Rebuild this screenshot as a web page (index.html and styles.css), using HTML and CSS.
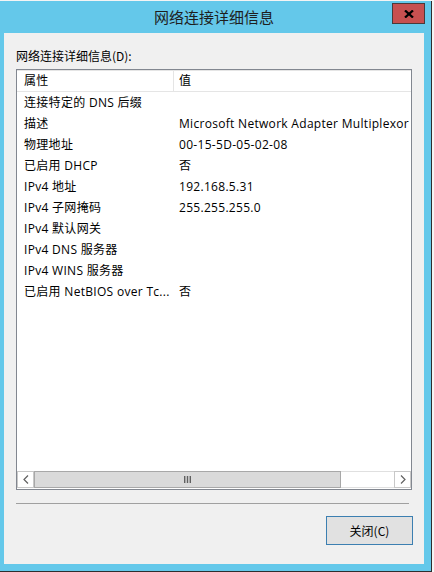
FILE: index.html
```html
<!DOCTYPE html>
<html lang="zh-CN">
<head>
<meta charset="utf-8">
<title>网络连接详细信息</title>
<link rel="stylesheet" href="styles.css">
</head>
<body>
<div class="window">
  <div class="titlebar">
    <div class="title">网络连接详细信息</div>
    <div class="close-btn" aria-label="关闭">
      <svg width="10" height="8" viewBox="0 0 10 8"><path d="M1 0.5 L9 7.5 M9 0.5 L1 7.5" stroke="#000" stroke-width="2.3" fill="none"/></svg>
    </div>
  </div>
  <div class="client">
    <div class="label">网络连接详细信息(D):</div>
    <div class="listbox">
      <div class="header">
        <div class="col1 hcell">属性</div>
        <div class="col2 hcell">值</div>
      </div>
      <div class="rows">
        <div class="row"><div class="col1">连接特定的 DNS 后缀</div><div class="col2"></div></div>
        <div class="row"><div class="col1">描述</div><div class="col2">Microsoft Network Adapter Multiplexor</div></div>
        <div class="row"><div class="col1">物理地址</div><div class="col2">00-15-5D-05-02-08</div></div>
        <div class="row"><div class="col1">已启用 DHCP</div><div class="col2">否</div></div>
        <div class="row"><div class="col1">IPv4 地址</div><div class="col2">192.168.5.31</div></div>
        <div class="row"><div class="col1">IPv4 子网掩码</div><div class="col2">255.255.255.0</div></div>
        <div class="row"><div class="col1">IPv4 默认网关</div><div class="col2"></div></div>
        <div class="row"><div class="col1">IPv4 DNS 服务器</div><div class="col2"></div></div>
        <div class="row"><div class="col1">IPv4 WINS 服务器</div><div class="col2"></div></div>
        <div class="row"><div class="col1">已启用 NetBIOS over Tc...</div><div class="col2">否</div></div>
      </div>
      <div class="hscroll">
        <div class="sbtn">
          <svg width="6" height="9" viewBox="0 0 6 9"><path d="M5 0.5 L1 4.5 L5 8.5" stroke="#606060" stroke-width="1.2" fill="none"/></svg>
        </div>
        <div class="thumb">
          <svg width="7" height="7" viewBox="0 0 7 7"><rect x="0" y="0" width="1.4" height="7" fill="#606060"/><rect x="2.8" y="0" width="1.4" height="7" fill="#606060"/><rect x="5.6" y="0" width="1.4" height="7" fill="#606060"/></svg>
        </div>
        <div class="track"></div>
        <div class="sbtn">
          <svg width="6" height="9" viewBox="0 0 6 9"><path d="M1 0.5 L5 4.5 L1 8.5" stroke="#606060" stroke-width="1.2" fill="none"/></svg>
        </div>
      </div>
    </div>
    <div class="separator"></div>
    <div class="footer">
      <button class="button">关闭(C)</button>
    </div>
  </div>
</div>
</body>
</html>
```
FILE: styles.css
```css
html, body {
  margin: 0;
  padding: 0;
}
body {
  background: #f4f4f4;
  width: 434px;
  height: 572px;
  overflow: hidden;
  font-family: "Open Sans", "Noto Sans CJK SC", sans-serif;
  font-size: 12px;
  color: #000;
}
.window {
  margin-top: 1px;
  width: 432px;
  height: 571px;
  box-sizing: border-box;
  background: #64c8ea;
  border-right: 1px solid #2e2e2e;
  border-bottom: 1px solid #2e2e2e;
  padding: 0 7px 7px 4px;
  display: flex;
  flex-direction: column;
}
.titlebar {
  position: relative;
  height: 32px;
  flex: none;
  display: flex;
  align-items: center;
  justify-content: center;
}
.title {
  font-family: "Noto Sans CJK SC", sans-serif;
  font-size: 15px;
  color: #1e1e1e;
  line-height: 20px;
  margin-top: -1px;
}
.close-btn {
  position: absolute;
  left: 388px;
  top: 2px;
  width: 31px;
  height: 19px;
  background: #c75050;
  border: 1px solid #4a3a3a;
  display: flex;
  align-items: center;
  justify-content: center;
}
.client {
  flex: 1;
  background: #f0f0f0;
  padding: 15px 12px 0 12px;
  display: flex;
  flex-direction: column;
}
.label {
  height: 16px;
  line-height: 16px;
  font-family: "Noto Sans CJK SC", sans-serif;
}
.listbox {
  margin-top: 5px;
  height: 421px;
  box-sizing: border-box;
  border: 1px solid #828790;
  background: #fff;
  display: flex;
  flex-direction: column;
  overflow: hidden;
  letter-spacing: 0.3px;
}
.header {
  flex: none;
  height: 22px;
  box-sizing: border-box;
  border-top: 1px solid #e5e5e5;
  border-bottom: 1px solid #e5e5e5;
  display: flex;
}
.hcell {
  line-height: 20px;
}
.header .col1 {
  border-right: 1px solid #e5e5e5;
}
.col1 {
  flex: none;
  width: 157px;
  box-sizing: border-box;
  padding-left: 7px;
  white-space: nowrap;
  overflow: hidden;
}
.col2 {
  flex: 1;
  min-width: 0;
  padding-left: 5px;
  white-space: nowrap;
  overflow: hidden;
}
.rows {
  flex: 1;
  overflow: hidden;
}
.row {
  height: 21px;
  line-height: 21px;
  display: flex;
  white-space: nowrap;
}
.hscroll {
  flex: none;
  height: 17px;
  margin-bottom: 1px;
  display: flex;
  background: #fff;
}
.sbtn {
  flex: none;
  width: 17px;
  box-sizing: border-box;
  border: 1px solid #c8c8c8;
  background: #fff;
  display: flex;
  align-items: center;
  justify-content: center;
}
.thumb {
  flex: none;
  width: 307px;
  box-sizing: border-box;
  border: 1px solid #a8a8a8;
  background: #dadada;
  display: flex;
  align-items: center;
  justify-content: center;
}
.track {
  flex: 1;
  border-top: 1px solid #e0e0e0;
  border-bottom: 1px solid #e0e0e0;
}
.separator {
  margin-top: 13px;
  height: 1px;
  margin-right: 3px;
  background: #a0a0a0;
}
.footer {
  display: flex;
  justify-content: flex-end;
  margin-top: 12px;
}
.button {
  width: 87px;
  height: 29px;
  box-sizing: border-box;
  border: 1px solid #3c7fb1;
  background: #e1e1e1;
  font-family: "Noto Sans CJK SC", sans-serif;
  font-size: 12px;
  color: #000;
  padding: 0;
  margin-right: -1px;
}
```
